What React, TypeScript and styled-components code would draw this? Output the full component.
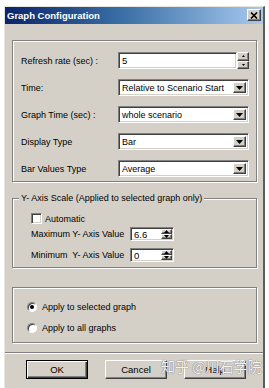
import React from 'react';
import styled, { createGlobalStyle, css } from 'styled-components';

const GlobalStyle = createGlobalStyle`
  html, body {
    margin: 0;
    padding: 0;
    background: #fff;
  }
  body {
    font-family: "Liberation Sans", Arial, sans-serif;
    font-size: 9px;
    color: #000;
  }
`;

const etched = css`
  border: 1px solid #808080;
  box-shadow: inset 1px 1px 0 #fff, 1px 1px 0 #fff;
`;

const sunken = css`
  box-sizing: border-box;
  background: #fff;
  border-style: solid;
  border-width: 1px;
  border-color: #808080 #fff #fff #808080;
  box-shadow: inset 1px 1px 0 #404040, inset -1px -1px 0 #d4d0c8;
`;

const raised = css`
  box-sizing: border-box;
  background: #d4d0c8;
  border-style: solid;
  border-width: 1px;
  border-color: #fff #404040 #404040 #fff;
  box-shadow: inset -1px -1px 0 #808080;
`;

const Page = styled.div`
  height: 388px;
  box-sizing: border-box;
  padding: 6px 0 0 4px;
  overflow: hidden;
`;

const Window = styled.div`
  position: relative;
  width: 261px;
  height: 382px;
  box-sizing: border-box;
  background: #d4d0c8;
  border-left: 1px solid #e6e4de;
  border-top: 1px solid #e6e4de;
  border-right: 2px solid #5c5c5c;
  display: flex;
  flex-direction: column;
`;

const TitleBar = styled.div`
  height: 17px;
  display: flex;
  align-items: center;
  justify-content: space-between;
  padding: 0 2px 1px 2px;
  box-sizing: border-box;
  background: linear-gradient(90deg, #0a246a 0%, #3a6ea5 45%, #a6caf0 100%);
`;

const Title = styled.span`
  color: #fff;
  font-weight: bold;
  font-size: 9.5px;
`;

const CloseButton = styled.div`
  ${raised};
  width: 14px;
  height: 12px;
  display: flex;
  align-items: center;
  justify-content: center;
`;

const Content = styled.div`
  display: flex;
  flex-direction: column;
  padding: 0 6px 0 7px;
`;

const SettingsGrid = styled.div`
  ${etched};
  margin-top: 16px;
  display: grid;
  grid-template-columns: 97px 131px;
  grid-auto-rows: 17px;
  row-gap: 10px;
  align-items: center;
  padding: 11px 6px 4px 8px;
`;

const Label = styled.span`
  white-space: pre;
`;

const FieldRow = styled.div`
  display: flex;
  height: 17px;
`;

const TextBox = styled.div`
  ${sunken};
  flex: 1;
  display: flex;
  align-items: center;
  padding-left: 3px;
  font-size: 9.5px;
`;

const SpinColumn = styled.div<{ $w: number }>`
  width: ${p => p.$w}px;
  display: flex;
  flex-direction: column;
`;

const SpinButton = styled.div`
  ${raised};
  flex: 1;
  display: flex;
  align-items: center;
  justify-content: center;
`;

const Combo = styled.div`
  ${sunken};
  height: 17px;
  display: flex;
  align-items: stretch;
  padding: 2px;
`;

const ComboValue = styled.span`
  flex: 1;
  display: flex;
  align-items: center;
  padding-left: 1px;
  font-size: 9px;
`;

const DropButton = styled.div`
  ${raised};
  width: 13px;
  display: flex;
  align-items: center;
  justify-content: center;
`;

const ScaleFieldset = styled.fieldset`
  ${etched};
  margin: 11px 0 0;
  padding: 0 6px 5px 8px;
  min-width: 0;
`;

const Legend = styled.legend`
  padding: 0 2px;
  margin-left: -2px;
  line-height: 11px;
  font-size: 9px;
  background: #d4d0c8;
`;

const ScaleBody = styled.div`
  display: flex;
  flex-direction: column;
  padding: 8px 0 0 10px;
`;

const CheckRow = styled.label`
  display: flex;
  align-items: center;
  gap: 3px;
  height: 13px;
`;

const CheckBox = styled.span`
  ${sunken};
  width: 11px;
  height: 11px;
`;

const ValueRow = styled.div<{ $top: number }>`
  display: grid;
  grid-template-columns: 99px 44px;
  align-items: center;
  height: 14px;
  margin-top: ${p => p.$top}px;
`;

const SmallSpin = styled.div`
  ${sunken};
  height: 14px;
  display: flex;
  padding: 1px;
`;

const SmallValue = styled.span`
  flex: 1;
  display: flex;
  align-items: center;
  padding-left: 2px;
  font-size: 9.5px;
`;

const RadioFrame = styled.div`
  ${etched};
  margin-top: 19px;
  display: flex;
  flex-direction: column;
  gap: 8px;
  padding: 12px 0 8px 14px;
`;

const RadioRow = styled.label`
  display: flex;
  align-items: center;
  gap: 5px;
  height: 13px;
`;

const RadioDot = styled.span<{ $on?: boolean }>`
  box-sizing: border-box;
  width: 10px;
  height: 10px;
  border-radius: 50%;
  border: 1px solid;
  border-color: #808080 #fff #fff #808080;
  background: #fff;
  box-shadow: inset 1px 1px 0 #404040;
  display: flex;
  align-items: center;
  justify-content: center;
  &::after {
    content: '';
    width: 4px;
    height: 4px;
    border-radius: 50%;
    background: ${p => (p.$on ? '#000' : 'transparent')};
  }
`;

const Separator = styled.div`
  margin-top: 9px;
  height: 0;
  border-top: 1px solid #808080;
  border-bottom: 1px solid #fff;
`;

const ButtonRow = styled.div`
  display: flex;
  gap: 17px;
  padding: 6px 0 0 21px;
`;

const PushButton = styled.div<{ $default?: boolean }>`
  box-sizing: border-box;
  width: 62px;
  height: 19px;
  display: flex;
  align-items: center;
  justify-content: center;
  background: #d4d0c8;
  font-size: 9.5px;
  ${p =>
    p.$default
      ? css`
          border: 1px solid #000;
          box-shadow: inset 1px 1px 0 #fff, inset -1px -1px 0 #404040,
            inset -2px -2px 0 #808080;
        `
      : css`
          border-style: solid;
          border-width: 1px;
          border-color: #fff #404040 #404040 #fff;
          box-shadow: inset -1px -1px 0 #808080;
        `}
`;

const Watermark = styled.div`
  position: absolute;
  left: 156px;
  top: 349px;
  font-family: "Noto Sans CJK SC", sans-serif;
  font-size: 14px;
  color: rgba(255, 255, 255, 0.92);
  text-shadow: 0 0 1px #7a7a7a, 0 0 1px #7a7a7a;
  white-space: pre;
  pointer-events: none;
`;

const Arrow: React.FC<{ up?: boolean; w?: number; h?: number }> = ({ up, w = 7, h = 4 }) => (
  <svg width={w} height={h} viewBox={`0 0 ${w} ${h}`}>
    <polygon
      points={up ? `0,${h} ${w},${h} ${w / 2},0` : `0,0 ${w},0 ${w / 2},${h}`}
      fill="#000"
    />
  </svg>
);

const ComboField: React.FC<{ value: string }> = ({ value }) => (
  <Combo>
    <ComboValue>{value}</ComboValue>
    <DropButton>
      <Arrow />
    </DropButton>
  </Combo>
);

const SpinBox: React.FC<{ value: string }> = ({ value }) => (
  <SmallSpin>
    <SmallValue>{value}</SmallValue>
    <SpinColumn $w={11}>
      <SpinButton>
        <Arrow up w={5} h={3} />
      </SpinButton>
      <SpinButton>
        <Arrow w={5} h={3} />
      </SpinButton>
    </SpinColumn>
  </SmallSpin>
);

const App: React.FC = () => {
  return (
    <Page>
      <GlobalStyle />
      <Window>
        <TitleBar>
          <Title>Graph Configuration</Title>
          <CloseButton>
            <svg width="8" height="7" viewBox="0 0 8 7">
              <path d="M1 0.5 L7 6.5 M7 0.5 L1 6.5" stroke="#000" strokeWidth="1.6" />
            </svg>
          </CloseButton>
        </TitleBar>

        <Content>
          <SettingsGrid>
            <Label>Refresh rate (sec) :</Label>
            <FieldRow>
              <TextBox>5</TextBox>
              <SpinColumn $w={12}>
                <SpinButton>
                  <Arrow up w={3} h={2} />
                </SpinButton>
                <SpinButton>
                  <Arrow w={3} h={2} />
                </SpinButton>
              </SpinColumn>
            </FieldRow>

            <Label>Time:</Label>
            <ComboField value="Relative to Scenario Start" />

            <Label>Graph Time (sec) :</Label>
            <ComboField value="whole scenario" />

            <Label>Display Type</Label>
            <ComboField value="Bar" />

            <Label>Bar Values Type</Label>
            <ComboField value="Average" />
          </SettingsGrid>

          <ScaleFieldset>
            <Legend>Y- Axis Scale (Applied to selected graph only)</Legend>
            <ScaleBody>
              <CheckRow>
                <CheckBox />
                <span>Automatic</span>
              </CheckRow>
              <ValueRow $top={2}>
                <Label>Maximum Y- Axis Value</Label>
                <SpinBox value="6.6" />
              </ValueRow>
              <ValueRow $top={7}>
                <Label>Minimum  Y- Axis Value</Label>
                <SpinBox value="0" />
              </ValueRow>
            </ScaleBody>
          </ScaleFieldset>

          <RadioFrame>
            <RadioRow>
              <RadioDot $on />
              <span>Apply to selected graph</span>
            </RadioRow>
            <RadioRow>
              <RadioDot />
              <span>Apply to all graphs</span>
            </RadioRow>
          </RadioFrame>
        </Content>

        <Separator />

        <ButtonRow>
          <PushButton $default>OK</PushButton>
          <PushButton>Cancel</PushButton>
          <PushButton>Help</PushButton>
        </ButtonRow>

        <Watermark>知乎 @川石学院</Watermark>
      </Window>
    </Page>
  );
};

export default App;
